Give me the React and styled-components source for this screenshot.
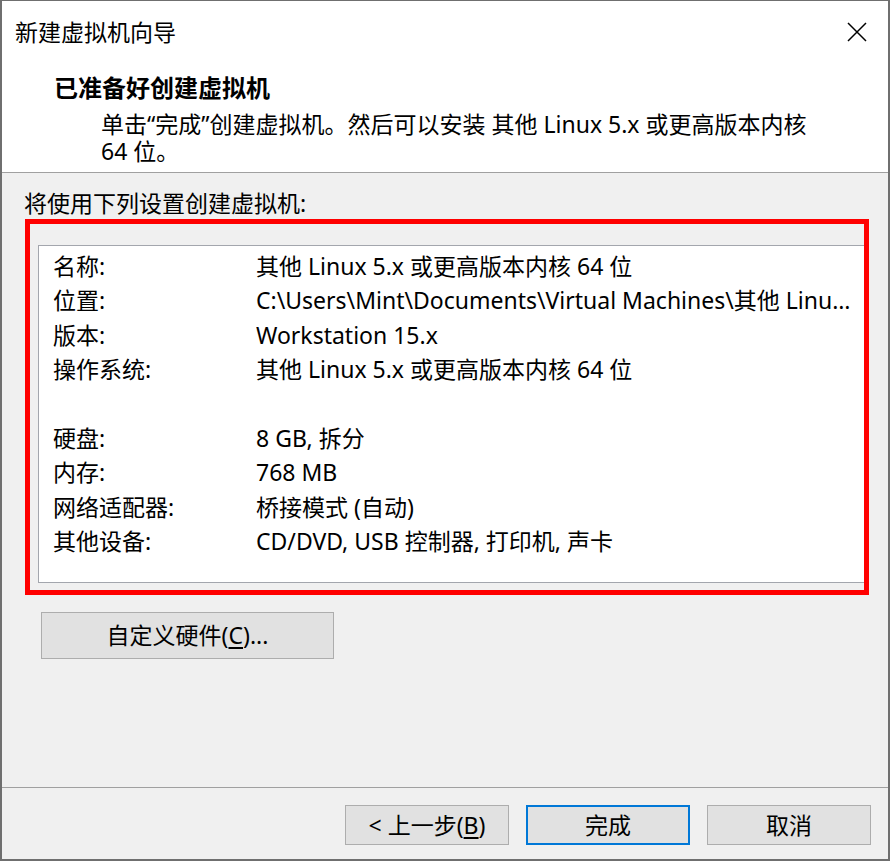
import React from "react";
import styled, { createGlobalStyle } from "styled-components";

const GlobalStyle = createGlobalStyle`
  html, body {
    margin: 0;
    padding: 0;
    background: #ffffff;
  }
  * {
    box-sizing: border-box;
  }
`;

const FONT = `"Noto Sans", "Noto Sans CJK SC", sans-serif`;

const Window = styled.div`
  width: 890px;
  height: 861px;
  display: flex;
  flex-direction: column;
  border-style: solid;
  border-color: #6f6f6f;
  border-width: 1px 2px 2px 2px;
  font-family: ${FONT};
  font-size: 23px;
  color: #000;
  background: #f0f0f0;
`;

const TitleBar = styled.div`
  height: 62px;
  flex: none;
  display: flex;
  align-items: center;
  justify-content: space-between;
  padding: 0 21px 0 13px;
  background: #fff;
`;

const TitleText = styled.span`
  line-height: 62px;
`;

const CloseButton = styled.button`
  width: 20px;
  height: 20px;
  padding: 0;
  border: none;
  background: transparent;
  display: flex;
  cursor: pointer;
`;

const Header = styled.div`
  flex: none;
  height: 110px;
  background: #fff;
  border-bottom: 1px solid #a0a0a0;
  padding: 10px 0 0 52px;
`;

const Heading = styled.div`
  font-size: 24px;
  font-weight: bold;
  line-height: 30px;
`;

const Description = styled.div`
  margin: 8px 0 0 47px;
  line-height: 27px;
`;

const Body = styled.div`
  flex: 1;
  padding: 15px 0 0 22px;
  display: flex;
  flex-direction: column;
  align-items: flex-start;
`;

const Caption = styled.div`
  line-height: 30px;
`;

const ListBox = styled.div`
  position: relative;
  width: 827px;
  height: 338px;
  margin: 27px 0 0 14px;
  padding: 3px 12px 0 14px;
  background: #fff;
  border: 1px solid #a3a6ad;
`;

const Highlight = styled.div`
  position: absolute;
  left: -14px;
  top: -27px;
  right: -5px;
  bottom: -13px;
  border: 5px solid #ff0000;
  pointer-events: none;
`;

const Row = styled.div`
  display: grid;
  grid-template-columns: 203px minmax(0, 1fr);
  height: 34.4px;
  line-height: 34.4px;
`;

const Label = styled.span`
  white-space: nowrap;
`;

const Value = styled.span`
  white-space: nowrap;
  overflow: hidden;
  text-overflow: ellipsis;
`;

const Button = styled.button`
  font-family: ${FONT};
  font-size: 23px;
  color: #000;
  background: #e1e1e1;
  border: ${(p) => (p.$default ? "2px solid #0078d7" : "1px solid #adadad")};
  width: ${(p) => p.$width || 164}px;
  height: ${(p) => p.$height || 40}px;
  padding: 0;
  line-height: 1;
  display: flex;
  align-items: center;
  justify-content: center;
  cursor: pointer;
`;

const HardwareButton = styled(Button)`
  margin: 29px 0 0 17px;
`;

const AccessKey = styled.span`
  text-decoration: underline;
  text-underline-offset: 3px;
`;

const Footer = styled.div`
  flex: none;
  height: 72px;
  border-top: 1px solid #a0a0a0;
  padding: 17px 17px 0 0;
  display: flex;
  justify-content: flex-end;
  align-items: flex-start;
  gap: 17px;
`;

const settings = [
  ["名称:", "其他 Linux 5.x 或更高版本内核 64 位"],
  ["位置:", "C:\\Users\\Mint\\Documents\\Virtual Machines\\其他 Linux 5.x 或更高版本内核 64 位"],
  ["版本:", "Workstation 15.x"],
  ["操作系统:", "其他 Linux 5.x 或更高版本内核 64 位"],
  ["", ""],
  ["硬盘:", "8 GB, 拆分"],
  ["内存:", "768 MB"],
  ["网络适配器:", "桥接模式 (自动)"],
  ["其他设备:", "CD/DVD, USB 控制器, 打印机, 声卡"],
];

const CloseIcon = () => (
  <svg width="20" height="20" viewBox="0 0 20 20">
    <path d="M1 1 L19 19 M19 1 L1 19" stroke="#000" strokeWidth="1.5" fill="none" />
  </svg>
);

export default function App() {
  return (
    <>
      <GlobalStyle />
      <Window>
        <TitleBar>
          <TitleText>新建虚拟机向导</TitleText>
          <CloseButton aria-label="关闭">
            <CloseIcon />
          </CloseButton>
        </TitleBar>
        <Header>
          <Heading>已准备好创建虚拟机</Heading>
          <Description>
            单击“完成”创建虚拟机。然后可以安装 其他 Linux 5.x 或更高版本内核
            <br />
            64 位。
          </Description>
        </Header>
        <Body>
          <Caption>将使用下列设置创建虚拟机:</Caption>
          <ListBox>
            {settings.map(([label, value], i) => (
              <Row key={i}>
                <Label>{label}</Label>
                <Value>{value}</Value>
              </Row>
            ))}
            <Highlight />
          </ListBox>
          <HardwareButton $width={293} $height={47}>
            自定义硬件(<AccessKey>C</AccessKey>)...
          </HardwareButton>
        </Body>
        <Footer>
          <Button>
            &lt; 上一步(<AccessKey>B</AccessKey>)
          </Button>
          <Button $default>完成</Button>
          <Button>取消</Button>
        </Footer>
      </Window>
    </>
  );
}
